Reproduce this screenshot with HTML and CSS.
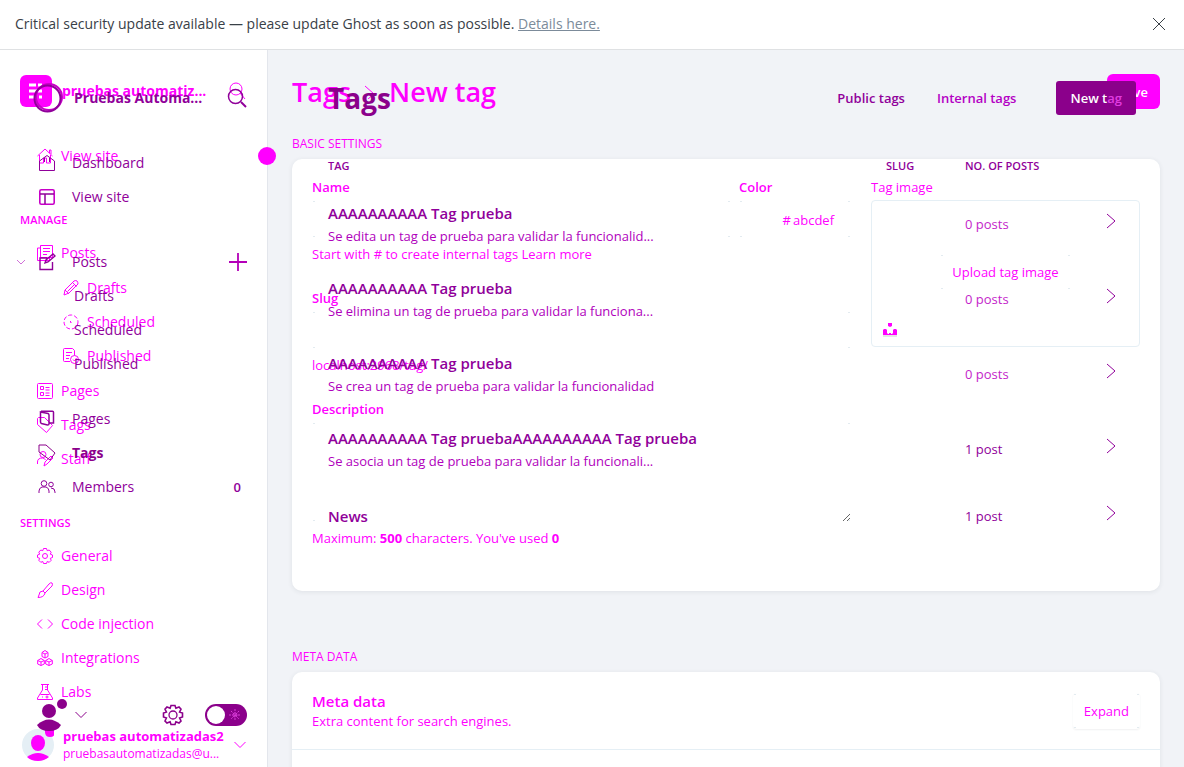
FILE: index.html
```html
<!DOCTYPE html>
<html lang="en">
<head>
<meta charset="utf-8">
<title>Tags</title>
<link rel="stylesheet" href="styles.css">
</head>
<body>
<div class="alert">
  <p class="alert-text">Critical security update available — please update Ghost as soon as possible. <a href="#">Details here.</a></p>
  <button class="plain" type="button" aria-label="Close"><svg width="14" height="14" viewBox="0 0 14 14"><path d="M1 1l12 12M13 1L1 13"/></svg></button>
</div>
<div class="stage">
  <div class="layer form-layer">
    <aside class="sidebar">
      <header class="site">
        <span class="site-logo"><svg width="32" height="32" viewBox="0 0 32 32"><path d="M9 10h7M18 10h4M9 16h13M9 22h7M19 22h3" stroke="#fff" stroke-width="3"/></svg></span>
        <strong class="site-name">pruebas automatiz...</strong>
        <button class="plain" type="button" aria-label="Search"><svg width="18" height="18" viewBox="0 0 18 18"><circle cx="8" cy="7" r="6"/><path d="M12 11l5 6"/></svg></button>
      </header>
      <nav class="nav">
        <a href="#"><svg width="16" height="16" viewBox="0 0 16 16"><path d="M0.500 8L8 1l7.500 7M2.500 7v8h4v-5h3v5h4V7M12.500 5V2h1.500v4"/></svg>View site</a>
        <h3 class="nav-label">MANAGE</h3>
        <a href="#"><svg width="16" height="16" viewBox="0 0 16 16"><path d="M3.500 0.500h12v12h-12zM3.500 3h-3v12.500h12v-3M6 3.500h7M6 6.500h7M6 9.500h4"/></svg>Posts</a>
        <div class="subnav">
          <a href="#"><svg width="16" height="16" viewBox="0 0 16 16"><path d="M1 15l1-5 9-9q2-1 3 0t1 3l-9 9zM9.500 2.500l4 4M2 10l4 4M4.500 11.500l7-7"/></svg>Drafts</a>
          <a href="#"><svg width="16" height="16" viewBox="0 0 16 16"><circle cx="8" cy="8" r="7" stroke-dasharray="4 2"/><path d="M7.500 7v1.500h1"/></svg>Scheduled</a>
          <a href="#"><svg width="16" height="16" viewBox="0 0 16 16"><path d="M7 13.500H1.500q-1 0-1-1v-11q0-1 1-1h8l2 2v5M3 4.500h6M3 7.500h4M3 10.500h3"/><circle cx="11.500" cy="11.500" r="4"/><path d="M10 11.500l1.500 1.500 2-3"/></svg>Published</a>
        </div>
        <a href="#"><svg width="16" height="16" viewBox="0 0 16 16"><rect x=".5" y=".5" width="15" height="15" rx="1"/><path d="M3.500 3.500h3v3h-3zM3.500 9.500h3v3h-3zM8.500 4.500h4M8.500 7h4M8.500 10h4M8.500 12.500h4"/></svg>Pages</a>
        <a href="#"><svg width="16" height="16" viewBox="0 0 16 16"><path d="M0.500 1.500l1-1h6l8 8-6 7-9-8z"/><path d="M3.500 3v1.500"/></svg>Tags</a>
        <a href="#"><svg width="16" height="16" viewBox="0 0 16 16"><circle cx="6" cy="3.500" r="3"/><path d="M0.500 13v-2q0-4 5-4 2 0 3 2M7 15l1-4 6-6 2 2-6 6z"/></svg>Staff</a>
        <h3 class="nav-label">SETTINGS</h3>
        <a href="#"><svg width="16" height="16" viewBox="0 0 16 16"><path d="M6.500.5h3l.7 2.200 2-.7 2 2.200-.9 2 2.200.8v2.500l-2.200.8.900 2-2 2-2-.8-.7 2h-3l-.7-2-2 .8-2-2 .9-2-2.200-.8V7l2.200-.8-.9-2 2-2.200 2 .7z"/><circle cx="8" cy="8" r="2.500"/></svg>General</a>
        <a href="#"><svg width="16" height="16" viewBox="0 0 16 16"><path d="M15 1q-1-1-3 1L6 9l2 2 7-7q1-2 0-3M6 9q-4 0-4 4l-1 2.500q6 0 7-4.500"/></svg>Design</a>
        <a href="#"><svg width="16" height="16" viewBox="0 0 16 16"><path d="M5 3.500L.5 8 5 12.500M11 3.500L15.500 8 11 12.500"/></svg>Code injection</a>
        <a href="#"><svg width="16" height="16" viewBox="0 0 16 16"><path d="M8 .5l3 2v4l-3 1.500-3-1.500v-4zM4 8.500l3.300 2v3.500L4 15.500.7 14v-3.500zM12 8.500l3.300 2v3.500L12 15.500 8.700 14v-3.500zM5 2.500l3 1.500 3-1.500M8 4v4M.7 10.500L4 12l3.300-1.500M4 12v3.500M8.700 10.500L12 12l3.300-1.500M12 12v3.500"/></svg>Integrations</a>
        <a href="#"><svg width="16" height="16" viewBox="0 0 16 16"><path d="M4 .5h8M5.500.5V6L.5 14v1.500h15V14l-5-8V.5M8 3h2.500M8 5.500h2.500M3.500 10.500h9M5 13h1M10 11.500v3M8.500 13h3"/></svg>Labs</a>
      </nav>
      <footer class="account">
        <svg width="34" height="34" viewBox="0 0 34 34"><circle class="soft" cx="18" cy="17" r="16"/><g class="fill"><path d="M25 2h10v2q0 5-5 5t-5-5z"/><ellipse cx="18" cy="15" rx="7" ry="8"/><path d="M7 29q11-8 22 0-5 4-11 4-7 0-11-4"/></g></svg>
        <div class="account-text"><strong>pruebas automatizadas2</strong><span>pruebasautomatizadas@u...</span></div>
        <button class="plain" type="button" aria-label="Account menu"><svg width="12" height="8" viewBox="0 0 12 8"><path d="M.5 1L6 6.500 11.500 1"/></svg></button>
      </footer>
      <span class="knob"></span>
    </aside>
    <main class="form-main">
      <header class="form-head">
        <h2><a href="#">Tags</a><svg width="12" height="14" viewBox="0 0 12 14"><path d="M1 1l9 8-6 5"/></svg><span>New tag</span></h2>
        <button class="save" type="button">Save</button>
      </header>
      <h4 class="section-label">BASIC SETTINGS</h4>
      <section class="card basic">
        <div class="fields">
          <div class="pair">
            <div class="field"><label for="name">Name</label><input class="box" id="name" type="text"></div>
            <div class="field"><label for="color">Color</label><span class="box color-box"><span>#</span><input id="color" type="text" placeholder="abcdef"></span></div>
          </div>
          <p class="help">Start with # to create internal tags <a href="#">Learn more</a></p>
          <div class="field"><label for="slug">Slug</label><input class="box" id="slug" type="text"></div>
          <p class="help">localhost:2968/tag/</p>
          <div class="field"><label for="desc">Description</label><textarea class="box area" id="desc"></textarea></div>
          <p class="help">Maximum: <b>500</b> characters. You've used <b>0</b></p>
        </div>
        <div class="field">
          <span class="field-title">Tag image</span>
          <div class="upload">
            <button class="plain upload-button" type="button">Upload tag image</button>
            <svg class="fill" width="14" height="14" viewBox="0 0 14 14"><path d="M5 0h4v3L7 4 5 3zM1 6h2l1 1v3l1 1h1v-1h2v1h1l1-1V7l1-1h2l1 1v5H0V7z"/><path d="M0 12.500h14v1H0z" fill="#ccc"/></svg>
          </div>
        </div>
      </section>
      <h4 class="section-label later">META DATA</h4>
      <section class="card meta">
        <div class="meta-row">
          <div><h4>Meta data</h4><p>Extra content for search engines.</p></div>
          <button class="plain expand" type="button">Expand</button>
        </div>
      </section>
    </main>
  </div>

  <div class="layer list-layer">
    <aside class="sidebar">
      <header class="site">
        <svg width="32" height="32" viewBox="0 0 32 32"><circle cx="17" cy="15" r="13" stroke="#c800c8" stroke-width="2"/><circle cx="15.500" cy="16.500" r="13" stroke-width="2"/></svg>
        <strong class="site-name">Pruebas Automa...</strong>
        <button class="plain" type="button" aria-label="Search"><svg width="20" height="20" viewBox="0 0 20 20"><circle cx="8.500" cy="8.500" r="7" stroke-width="1.500"/><path d="M14 14l5 5" stroke-width="2"/></svg></button>
      </header>
      <nav class="nav">
        <a href="#"><svg width="18" height="18" viewBox="0 0 18 18"><path d="M1.500 7L9 1.500 16.500 7v9.500h-15zM6.500 8V4M11.500 8V4"/></svg>Dashboard</a>
        <a href="#"><svg width="18" height="18" viewBox="0 0 18 18"><rect x="1.800" y="1.800" width="14.400" height="14.400" rx="1.500" stroke-width="1.600" stroke="#c800c8"/><path d="M2 6h14M7 6v10" stroke-width="1.500"/></svg>View site</a>
        <div class="group">
          <div class="with-action">
            <button class="plain" type="button" aria-label="Collapse posts"><svg width="10" height="8" viewBox="0 0 10 8"><path d="M1 2l4 4 4-4" stroke="#d070d8"/></svg></button>
            <a href="#"><svg width="18" height="18" viewBox="0 0 18 18"><path d="M9 5H2v11.500h12.500V9M7 10l1-3 7-6 2 2-7 6z" stroke-width="1.400"/></svg>Posts</a>
            <button class="plain" type="button" aria-label="New post"><svg width="18" height="18" viewBox="0 0 18 18"><path d="M9 0v18M0 9h18" stroke-width="1.800" stroke="#b400b8"/></svg></button>
          </div>
          <div class="subnav"><a href="#">Drafts</a><a href="#">Scheduled</a><a href="#">Published</a></div>
        </div>
        <div class="group lower">
          <a href="#"><svg width="18" height="18" viewBox="0 0 18 18"><path d="M3 1.200h11.500q1 0 1 1V13h-4M2.500 2v10q0 1 1 1.500l6 1.500q1.500 0 1.500-1V5q0-1-1-1.500z" stroke-width="1.500"/></svg>Pages</a>
          <a class="current" href="#"><svg width="18" height="18" viewBox="0 0 18 18"><path d="M1 1h7l9 8-5 7L1 8z"/></svg>Tags</a>
          <a href="#"><svg width="18" height="18" viewBox="0 0 18 18"><circle cx="6" cy="5.500" r="2.800"/><circle cx="13" cy="6.500" r="2.300"/><path d="M1 15v-2q0-3 3-4h4q3 1 3 4v2M13 10q4 0 4 4v1"/></svg>Members<span class="count">0</span></a>
        </div>
      </nav>
      <footer class="tools">
        <svg class="fill" width="30" height="32" viewBox="0 0 30 32"><circle cx="25" cy="5" r="5"/><circle cx="12" cy="12" r="7"/><path d="M0 26q12-11 24 0-3 6-12 6T0 26"/></svg>
        <button class="plain" type="button" aria-label="User menu"><svg width="12" height="8" viewBox="0 0 12 8"><path d="M.5 1L6 6.500 11.500 1"/></svg></button>
        <button class="plain push" type="button" aria-label="Settings"><svg width="22" height="22" viewBox="0 0 22 22"><path d="M9 1.500h4l.9 2.700L17 3l2 2.200-1.400 2.900 2.900.9v4l-2.900.9L19 17l-2 2-3.100-1.200L13 20.500H9l-.9-2.700L5 19l-2-2 1.400-3.100-2.900-.9V9l2.900-.9L3 5.200 5 3l3.100 1.200z" stroke-width="1.600"/><circle cx="11" cy="11" r="4" stroke-width="1.300"/></svg></button>
        <button class="plain" type="button" aria-label="Night shift"><svg width="42" height="22" viewBox="0 0 42 22"><rect class="shape" width="42" height="22" rx="11"/><circle cx="11" cy="11" r="9" fill="#fff" stroke="none"/><g stroke="#d83cd8" stroke-dasharray="2 1"><circle cx="30" cy="11" r="2"/><path d="M30 5v12M24 11h12M26 7l8 8M34 7l-8 8"/></g></svg></button>
      </footer>
    </aside>
    <main class="list-main">
      <header class="list-head">
        <h2>Tags</h2>
        <div class="list-actions"><a class="active" href="#">Public tags</a><a href="#">Internal tags</a><button class="new-tag" type="button">New t<span>ag</span></button></div>
      </header>
      <table class="tags">
        <colgroup><col><col class="col-slug"><col class="col-posts"><col class="col-arrow"></colgroup>
        <thead><tr><th>TAG</th><th>SLUG</th><th colspan="2">NO. OF POSTS</th></tr></thead>
        <tbody>
          <tr><td><h3>AAAAAAAAAA Tag prueba</h3><p>Se edita un tag de prueba para validar la funcionalid...</p></td><td></td><td class="none">0 posts</td><td><svg width="10" height="16" viewBox="0 0 10 16"><path d="M1 1l8 7-8 7"/></svg></td></tr>
          <tr><td><h3>AAAAAAAAAA Tag prueba</h3><p>Se elimina un tag de prueba para validar la funciona...</p></td><td></td><td class="none">0 posts</td><td><svg width="10" height="16" viewBox="0 0 10 16"><path d="M1 1l8 7-8 7"/></svg></td></tr>
          <tr><td><h3>AAAAAAAAAA Tag prueba</h3><p>Se crea un tag de prueba para validar la funcionalidad</p></td><td></td><td class="none">0 posts</td><td><svg width="10" height="16" viewBox="0 0 10 16"><path d="M1 1l8 7-8 7"/></svg></td></tr>
          <tr><td><h3>AAAAAAAAAA Tag pruebaAAAAAAAAAA Tag prueba</h3><p>Se asocia un tag de prueba para validar la funcionali...</p></td><td></td><td>1 post</td><td><svg width="10" height="16" viewBox="0 0 10 16"><path d="M1 1l8 7-8 7"/></svg></td></tr>
          <tr class="short"><td><h3>News</h3></td><td></td><td>1 post</td><td><svg width="10" height="16" viewBox="0 0 10 16"><path d="M1 1l8 7-8 7"/></svg></td></tr>
        </tbody>
      </table>
    </main>
  </div>
</div>
</body>
</html>
```
FILE: styles.css
```css
* { box-sizing: border-box; }
body {
  margin: 0;
  height: 100vh;
  display: flex;
  flex-direction: column;
  overflow: hidden;
  font-family: "Open Sans", "Noto Sans", sans-serif;
  font-size: 13px;
  line-height: 20px;
  background: #fff;
}
h2, h3, h4, p { margin: 0; }
a { color: inherit; text-decoration: none; }
button, input, textarea { font: inherit; color: inherit; }
svg { display: block; flex: none; fill: none; stroke: currentColor; }
.plain { display: flex; padding: 0; border: 0; background: none; }
.fill, .shape { fill: currentColor; stroke: none; }
.soft { fill: #e5eff5; stroke: none; }

.alert {
  flex: none;
  height: 50px;
  padding: 0 18px 2px 15px;
  display: flex;
  align-items: center;
  justify-content: space-between;
  border-bottom: 1px solid #dfe1e3;
  color: #394047;
  font-size: 14px;
}
.alert a { color: #7c8b9a; text-decoration: underline; }

.stage { flex: 1; min-height: 0; display: grid; grid-template: minmax(0, 1fr) / minmax(0, 1fr); }
.layer { grid-area: 1 / 1; min-height: 0; display: grid; grid-template-columns: 268px minmax(0, 1fr); }
.form-layer { color: #f0f; background: #f1f3f7; }
.list-layer { color: #90009a; z-index: 1; }
.sidebar { min-height: 0; display: flex; flex-direction: column; }
.site { display: flex; align-items: center; }
.site-name { flex: 1; font-size: 14px; white-space: nowrap; }
.nav { display: flex; flex-direction: column; }
.nav a { display: flex; align-items: center; height: 34px; font-size: 14px; }

.form-layer .sidebar { position: relative; padding: 25px 21px 4px 20px; background: #fff; border-right: 1px solid #e3e6ec; }
.form-layer .site { gap: 10px; height: 32px; }
.site-logo { background: #f0f; border-radius: 6px; }
.form-layer .nav { margin-top: 32px; }
.form-layer .nav a { gap: 8px; padding-left: 17px; }
.form-layer .subnav { margin: 1px 0; padding-left: 26px; }
.nav-label { margin: 36px 0 5px; font-size: 11px; line-height: 22px; font-weight: 600; }
.account { margin-top: auto; display: flex; align-items: center; gap: 9px; }
.account-text { flex: 1; display: flex; flex-direction: column; font-size: 12px; line-height: 18px; white-space: nowrap; }
.account-text strong { font-size: 13px; }
.knob { position: absolute; right: -9px; top: 97px; width: 18px; height: 18px; border-radius: 50%; background: #f0f; }

.form-main { min-height: 0; padding: 24px 24px 0; overflow: hidden; }
.form-head { display: flex; align-items: center; justify-content: space-between; height: 35px; }
.form-head h2 { display: flex; align-items: center; gap: 13px; font-size: 27px; line-height: 34px; font-weight: 600; }
.save { height: 35px; padding: 0 12px; border: 0; border-radius: 6px; background: #f0f; color: #fff; font-weight: 600; }
.section-label { margin: 27px 0 7px; font-size: 12px; line-height: 16px; font-weight: 400; }
.section-label.later { margin-top: 58px; }
.card { background: #fff; border-radius: 10px; box-shadow: 0 1px 5px rgba(40, 50, 70, 0.09); }
.basic { display: grid; grid-template-columns: minmax(0, 1fr) 269px; gap: 20px; padding: 19px 20px 43px; align-items: start; }
.pair { display: grid; grid-template-columns: minmax(0, 1fr) 112px; gap: 8px; }
.field { display: flex; flex-direction: column; gap: 4px; }
.field label, .field-title { line-height: 18px; font-weight: 600; }
.field-title { font-weight: 500; }
.box, .upload-button, .expand {
  border: 0;
  background:
    linear-gradient(#e3ebf0, #e3ebf0) 1px 1px / 2px 1px no-repeat,
    linear-gradient(#e3ebf0, #e3ebf0) right 1px top 1px / 2px 1px no-repeat,
    linear-gradient(#e3ebf0, #e3ebf0) left 1px bottom 1px / 2px 1px no-repeat,
    linear-gradient(#e3ebf0, #e3ebf0) right 1px bottom 1px / 2px 1px no-repeat #fff;
}
.box { width: 100%; height: 38px; padding: 0 12px; }
.area { height: 100px; display: block; resize: vertical; }
.color-box { display: flex; align-items: center; justify-content: flex-end; gap: 2px; padding: 2px 6px 0; }
.color-box input { width: 52px; padding: 0; border: 0; background: none; }
.color-box input::placeholder { color: #f0f; opacity: 1; }
.help { margin: 6px 0 25px; }
.help:last-child { margin-bottom: 0; }
.upload { height: 147px; padding: 53px 11px 9px; border: 1px solid #e5eff5; border-radius: 4px; display: flex; flex-direction: column; justify-content: space-between; }
.upload-button { align-self: center; padding: 8px 12px; }
.meta { padding-bottom: 60px; }
.meta-row { display: flex; align-items: center; justify-content: space-between; padding: 19px 20px 18px; border-bottom: 1px solid #e5eff5; }
.meta-row h4 { font-size: 15px; line-height: 20px; font-weight: 600; }
.expand { padding: 8px 11px; border-radius: 4px; box-shadow: 0 1px 2px rgba(40, 50, 70, 0.07); }

.list-layer .sidebar { padding: 32px 21px 36px 32px; }
.list-layer .site { gap: 10px; height: 32px; }
.list-layer .nav { margin-top: 32px; }
.list-layer .nav a { gap: 16px; padding-left: 6px; }
.list-layer .nav .subnav a { padding-left: 42px; }
.group { margin-top: 31px; }
.group.lower { margin-top: 21px; }
.with-action { display: flex; align-items: center; margin-left: -16px; }
.with-action a { flex: 1; }
.list-layer .nav .with-action a { padding-left: 12px; }
.nav .current { font-weight: 700; color: #8b008b; }
.count { margin-left: auto; padding-right: 6px; font-size: 13px; font-weight: 600; }
.tools { margin-top: auto; padding-left: 5px; display: flex; align-items: center; gap: 8px; color: #8b008b; }
.push { margin: 0 13px 0 auto; }

.list-main { padding: 31px 48px 0 60px; }
.list-head { display: flex; align-items: center; justify-content: space-between; height: 34px; margin-bottom: 30px; }
.list-head h2 { color: #8b008b; font-size: 28px; line-height: 34px; font-weight: 700; }
.list-actions { display: flex; align-items: center; font-weight: 600; white-space: nowrap; }
.list-actions a { margin-right: 32px; color: #b400c4; }
.list-actions .active { color: #90009a; }
.new-tag { height: 34px; margin-left: 8px; padding: 0 14px; border: 0; border-radius: 3px; background: #8b008b; color: #fff; font-weight: 600; }
.new-tag span { color: #e03ce0; }
.tags { width: 100%; border-collapse: collapse; table-layout: fixed; text-align: left; }
.tags th { height: 41px; padding: 0; font-size: 11px; font-weight: 600; }
.tags td { height: 75px; padding: 0; white-space: nowrap; }
.tags .short td { height: 60px; }
.tags h3 { font-size: 15px; line-height: 22px; font-weight: 600; }
.tags p { margin-top: 2px; color: #b000bc; }
.tags .none { color: #c41fca; }
.tags td:last-child { padding-bottom: 6px; }
.col-slug { width: 79px; }
.col-posts { width: 141px; }
.col-arrow { width: 30px; }
```
